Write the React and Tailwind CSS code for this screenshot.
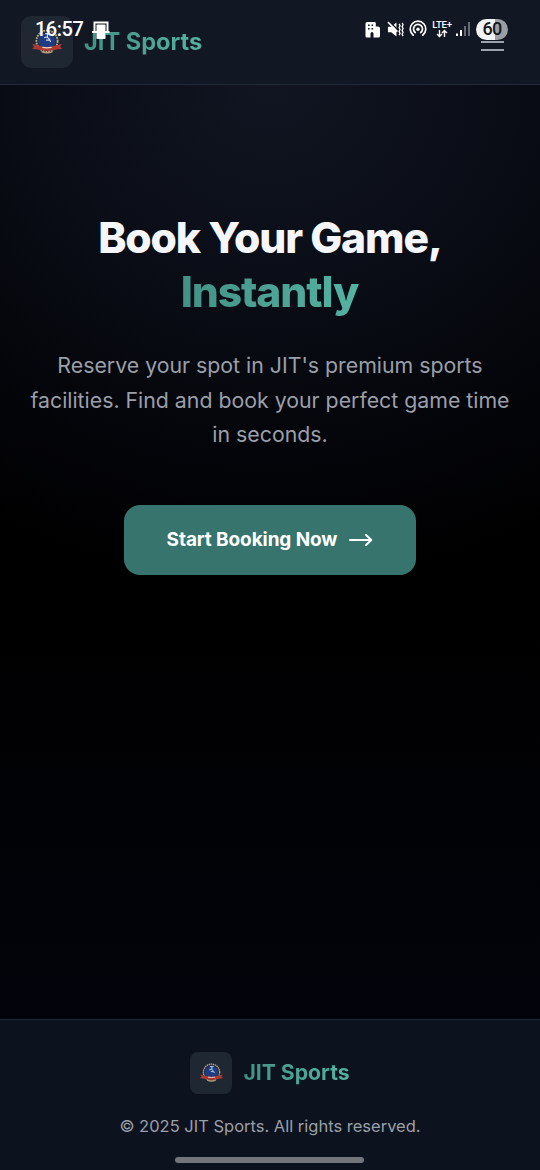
function Emblem({ className }) {
  return (
    <svg viewBox="0 0 32 28" className={className}>
      <circle cx="16" cy="13" r="11.4" fill="#20283a" stroke="#b9a680" strokeWidth="2" strokeDasharray="2 .9" />
      <circle cx="16" cy="13" r="9.2" fill="#1d3c84" />
      <path d="M14 5h5M16.500 5v4M13 9.500l3-1 3 3M15 12h4l1 2" fill="none" stroke="#d5dbe8" strokeWidth="1.200" />
      <path d="M0 16l6 1.500q10 3.500 20 0l6-1.500-1.800 3 2 2.500-6.200 .5q-10 3-20 0l-6-.5 2-2.500z" fill="#ad392f" />
      <path d="M11 19.800q5 1 10 0" fill="none" stroke="#f0d6ce" strokeWidth="1.300" />
      <path d="M10 24.300q6 2.500 12 0" fill="none" stroke="#b99b75" strokeWidth="1.500" />
    </svg>
  );
}

function StatusBar() {
  return (
    <div className="pointer-events-none absolute inset-x-0 top-0 z-20 flex h-[58px] items-center justify-between pr-8 pl-[35px] text-white">
      <div className="flex items-center gap-[8px]">
        <span className="w-[49px] font-['Roboto',sans-serif] text-[20px] leading-none font-medium tracking-[-0.5px]">16:57</span>
        <svg viewBox="0 0 18 20" className="mt-[2px] h-5 w-[18px]">
          <path d="M2.500 13V2.500h13V13" fill="none" stroke="#fff" strokeWidth="2" />
          <path d="M0 12h5M13 12h4.500" stroke="#fff" strokeWidth="1.800" />
          <rect x="4.500" y="4.500" width="9" height="14.500" rx=".8" fill="#fff" />
        </svg>
      </div>
      <div className="flex items-center">
        <svg viewBox="0 0 16 17" className="h-[17px] w-4">
          <path fillRule="evenodd" d="M2 1h7.500q1.300 0 1.300 1.300V5.500H13q2 0 2 2V15q0 1.500-1.500 1.500H8.500V12.500q0-1.500-1.500-1.500t-1.500 1.500v4H1.800Q.5 16.500.5 15V2.500Q.5 1 2 1zM3 3.500v1.500h1.600V3.500zM6.500 3.500v1.500h1.600V3.500zM3 7v1.500h1.600V7zM6.500 7v1.500h1.600V7z" fill="#fff" />
        </svg>
        <svg viewBox="0 0 18 18" className="ml-[6px] h-[17px] w-[17px]">
          <path d="M1 6h3.500L10 1.500v15L4.500 12H1z" fill="#fff" />
          <path d="M2.200 .2l9 9" stroke="#111723" strokeWidth="1.500" />
          <path d="M1 1.200l10 10" stroke="#fff" strokeWidth="1.700" />
          <path d="M12.800 3l1 2-1 2 1 2-1 2 1 2-1 2M16 2l1 2-1 2 1 2-1 2 1 2-1 2 1 2" fill="none" stroke="#fff" strokeWidth="1.400" />
        </svg>
        <svg viewBox="0 0 18 18" className="ml-[5px] h-[18px] w-[18px]">
          <g fill="none" stroke="#fff" strokeWidth="1.700" strokeLinecap="round">
            <path d="M4.300 15.200a7.800 7.800 0 1 1 9.400 0" />
            <path d="M6.300 12.500a4.500 4.500 0 1 1 5.400 0" />
          </g>
          <circle cx="9" cy="9.300" r="1.700" fill="#fff" />
        </svg>
        <div className="ml-[5px] flex w-5 flex-col items-center">
          <span className="font-['Roboto',sans-serif] text-[9.5px] leading-[9px] font-medium tracking-[-0.2px]">LTE+</span>
          <svg viewBox="0 0 12 9" className="h-[9px] w-3">
            <path d="M3.500 1v6.500M1 5l2.500 2.500L6 5M8.500 8V1.500M6 4l2.500-2.500L11 4" fill="none" stroke="#fff" strokeWidth="1.400" />
          </svg>
        </div>
        <svg viewBox="0 0 15 15" className="ml-[4px] h-[15px] w-[15px]">
          <rect x="0" y="11.500" width="2" height="2.500" fill="#fff" />
          <rect x="4" y="8" width="2" height="6" fill="#fff" />
          <rect x="8" y="4" width="2" height="10" fill="#656a74" />
          <rect x="12" y="0" width="2" height="14" fill="#656a74" />
        </svg>
        <div className="ml-[5px] flex h-[21px] w-8 items-center justify-center rounded-full bg-linear-to-r from-[#f2f3f4] from-60% to-[#9b9fa3] to-60%">
          <span className="font-['Roboto',sans-serif] text-[18px] leading-none font-medium tracking-[-0.8px] text-[#16181c]">60</span>
        </div>
      </div>
    </div>
  );
}

export default function App() {
  return (
    <div className="relative flex h-[1170px] w-[540px] flex-col overflow-hidden bg-black font-['Inter',sans-serif] [font-optical-sizing:none]">
      <StatusBar />
      <header className="flex h-[85px] shrink-0 items-center justify-between border-b border-[#1f2a37] bg-[#111723] pr-[36px] pl-[21px]">
        <div className="flex items-center gap-[11px]">
          <div className="flex size-[52px] items-center justify-center rounded-[10px] bg-[#1f2733]">
            <Emblem className="h-[26px] w-[30px]" />
          </div>
          <span className="bg-linear-to-r from-[#439185] to-[#55b3a2] bg-clip-text text-[23.6px] leading-8 font-bold text-transparent">JIT Sports</span>
        </div>
        <div className="flex w-[23px] flex-col gap-[6px]">
          <span className="h-[2px] bg-[#9ca3af]" />
          <span className="h-[2px] bg-[#9ca3af]" />
          <span className="h-[2px] bg-[#9ca3af]" />
        </div>
      </header>

      <main className="flex flex-1 flex-col items-center bg-[radial-gradient(ellipse_560px_500px_at_50%_0%,#101521_0%,#0a0d16_42%,#030408_78%,transparent_100%),linear-gradient(to_bottom,#07080d_0%,#000_46%,#000_58%,#02040b_100%)] pt-[126px] text-center">
        <h1 className="text-[42.6px] leading-[53.5px] font-extrabold tracking-[-1.1px] text-[#f5f6f9]">
          Book Your Game,
          <br />
          <span className="bg-linear-to-r from-[#439185] to-[#55b3a2] bg-clip-text pr-[1px] text-transparent">Instantly</span>
        </h1>
        <p className="mt-[30px] text-[21.3px] leading-[34.5px] text-[#9b9fa9]">
          Reserve your spot in JIT's premium sports
          <br />
          facilities. Find and book your perfect game time
          <br />
          in seconds.
        </p>
        <button className="mt-[53px] flex h-[70px] w-[292px] items-center justify-center gap-3 rounded-[16px] bg-[#36746d] text-[19px] font-bold tracking-[-0.1px] text-white">
          <span className="mt-[2px]">Start Booking Now</span>
          <svg viewBox="0 0 24 14" className="h-[14px] w-6">
            <path d="M1 7h21M17 2l5.300 5-5.300 5" fill="none" stroke="#fff" strokeWidth="1.900" strokeLinecap="round" strokeLinejoin="round" />
          </svg>
        </button>
      </main>

      <footer className="flex h-[151px] shrink-0 flex-col items-center border-t border-[#1d2733] bg-[#0d131e] pt-8">
        <div className="flex items-center gap-[11px]">
          <div className="flex size-[42px] items-center justify-center rounded-[8px] bg-[#1f2733]">
            <Emblem className="h-5 w-[23px]" />
          </div>
          <span className="-mt-[2px] bg-linear-to-r from-[#439185] to-[#55b3a2] bg-clip-text text-[21.2px] leading-7 font-bold text-transparent">JIT Sports</span>
        </div>
        <p className="mt-[20px] text-[16.5px] leading-6 text-[#9b9fa9]">© 2025 JIT Sports. All rights reserved.</p>
        <div className="mt-[19px] mr-[1px] h-[6px] w-[189px] rounded-full bg-[#72757c]" />
      </footer>
    </div>
  );
}
